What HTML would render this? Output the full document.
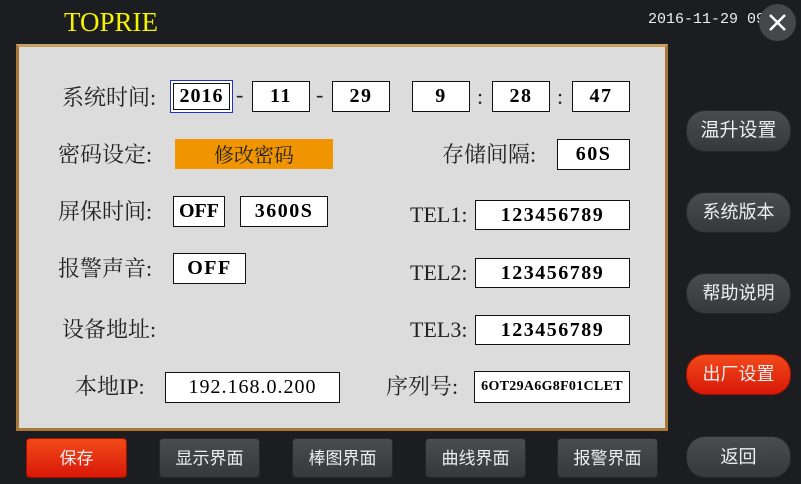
<!DOCTYPE html>
<html><head><meta charset="utf-8"><style>
*{margin:0;padding:0;box-sizing:border-box}
body{width:801px;height:484px;background:#1c1d21;position:relative;overflow:hidden;font-family:"Liberation Serif","Noto Serif CJK SC",serif}
.a{position:absolute}
#panel{left:16px;top:44px;width:652px;height:387px;border:3px solid #a87838;background:#dcdcdc;border-top-color:#c8a060}
.lbl{position:absolute;font-size:22px;color:#222;white-space:nowrap;line-height:30px;font-family:"Liberation Serif","Noto Serif CJK SC",serif}
.box{position:absolute;background:#fff;border:1px solid #111;font-size:20px;color:#000;text-align:center;line-height:28px;font-weight:bold;letter-spacing:1.5px;font-family:"Liberation Serif",serif}
.rb{position:absolute;left:686px;width:105px;border-radius:19px;background:linear-gradient(#4a4c50,#36383b);border:1px solid #26272a;color:#eee;font-family:"Liberation Sans","Noto Sans CJK SC",sans-serif;text-align:center;font-size:18px}
.bb{position:absolute;top:438px;width:101px;height:40px;border-radius:4px;background:linear-gradient(#4a4c50,#36383b);border:1px solid #26272a;color:#eee;font-family:"Liberation Sans","Noto Sans CJK SC",sans-serif;text-align:center;font-size:17px;line-height:40px}
.red{background:linear-gradient(#f24a1a,#d81808)}
</style></head><body>
<div class="a" style="left:64px;top:7px;font-size:27px;color:#f4f400;font-family:'Liberation Serif',serif">TOPRIE</div>
<div class="a" style="left:648px;top:11px;font-size:15px;color:#eee;font-family:'Liberation Mono',monospace">2016-11-29 09:5</div>
<div class="a" style="left:759px;top:4px;width:37px;height:37px;border-radius:50%;background:#46474a"><svg width="37" height="37"><path d="M11 11L26 26M26 11L11 26" stroke="#fff" stroke-width="2.5"/></svg></div>
<div id="panel" class="a"></div>
<div class="lbl" style="left:62px;top:83px">系统时间:</div>
<div class="box" style="left:170px;top:80px;width:63px;height:33px;border:1px solid #2030c0;padding:2px;letter-spacing:0"><div style="border:1px solid #111;height:27px;line-height:25px;letter-spacing:1px">2016</div></div>
<div class="lbl" style="left:236px;top:80px">-</div>
<div class="box" style="left:252px;top:81px;width:58px;height:31px">11</div>
<div class="lbl" style="left:316px;top:80px">-</div>
<div class="box" style="left:332px;top:81px;width:58px;height:31px">29</div>
<div class="box" style="left:412px;top:81px;width:58px;height:31px">9</div>
<div class="lbl" style="left:477px;top:82px">:</div>
<div class="box" style="left:492px;top:81px;width:58px;height:31px">28</div>
<div class="lbl" style="left:557px;top:82px">:</div>
<div class="box" style="left:572px;top:81px;width:58px;height:31px">47</div>

<div class="lbl" style="left:58px;top:140px">密码设定:</div>
<div class="a" style="left:175px;top:139px;width:158px;height:30px;background:#f09400;text-align:center;line-height:30px;font-size:20px;color:#222;font-family:'Noto Serif CJK SC',serif">修改密码</div>
<div class="lbl" style="left:442px;top:140px">存储间隔:</div>
<div class="box" style="left:557px;top:139px;width:73px;height:31px">60S</div>

<div class="lbl" style="left:58px;top:197px">屏保时间:</div>
<div class="box" style="left:173px;top:196px;width:52px;height:31px;letter-spacing:0">OFF</div>
<div class="box" style="left:240px;top:196px;width:88px;height:31px">3600S</div>
<div class="lbl" style="left:410px;top:200px">TEL1:</div>
<div class="box" style="left:475px;top:200px;width:155px;height:30px">123456789</div>

<div class="lbl" style="left:58px;top:254px">报警声音:</div>
<div class="box" style="left:173px;top:253px;width:73px;height:31px">OFF</div>
<div class="lbl" style="left:410px;top:258px">TEL2:</div>
<div class="box" style="left:475px;top:258px;width:155px;height:30px">123456789</div>

<div class="lbl" style="left:62px;top:315px">设备地址:</div>
<div class="lbl" style="left:410px;top:315px">TEL3:</div>
<div class="box" style="left:475px;top:315px;width:155px;height:30px">123456789</div>

<div class="lbl" style="left:75px;top:372px">本地IP:</div>
<div class="box" style="left:165px;top:372px;width:175px;height:31px;font-weight:normal;letter-spacing:1px">192.168.0.200</div>
<div class="lbl" style="left:386px;top:372px">序列号:</div>
<div class="box" style="left:474px;top:371px;width:156px;height:32px;font-size:14px;line-height:30px;letter-spacing:0.3px">6OT29A6G8F01CLET</div>

<div class="rb" style="top:110px;height:42px;line-height:40px;font-size:19px">温升设置</div>
<div class="rb" style="top:192px;height:41px;line-height:39px">系统版本</div>
<div class="rb" style="top:273px;height:41px;line-height:39px">帮助说明</div>
<div class="rb red" style="top:354px;height:41px;line-height:39px;border-color:#a01000">出厂设置</div>
<div class="rb" style="top:436px;height:42px;line-height:40px">返回</div>

<div class="bb red" style="left:26px;border-color:#a01000">保存</div>
<div class="bb" style="left:159px">显示界面</div>
<div class="bb" style="left:292px">棒图界面</div>
<div class="bb" style="left:425px">曲线界面</div>
<div class="bb" style="left:557px">报警界面</div>
</body></html>
